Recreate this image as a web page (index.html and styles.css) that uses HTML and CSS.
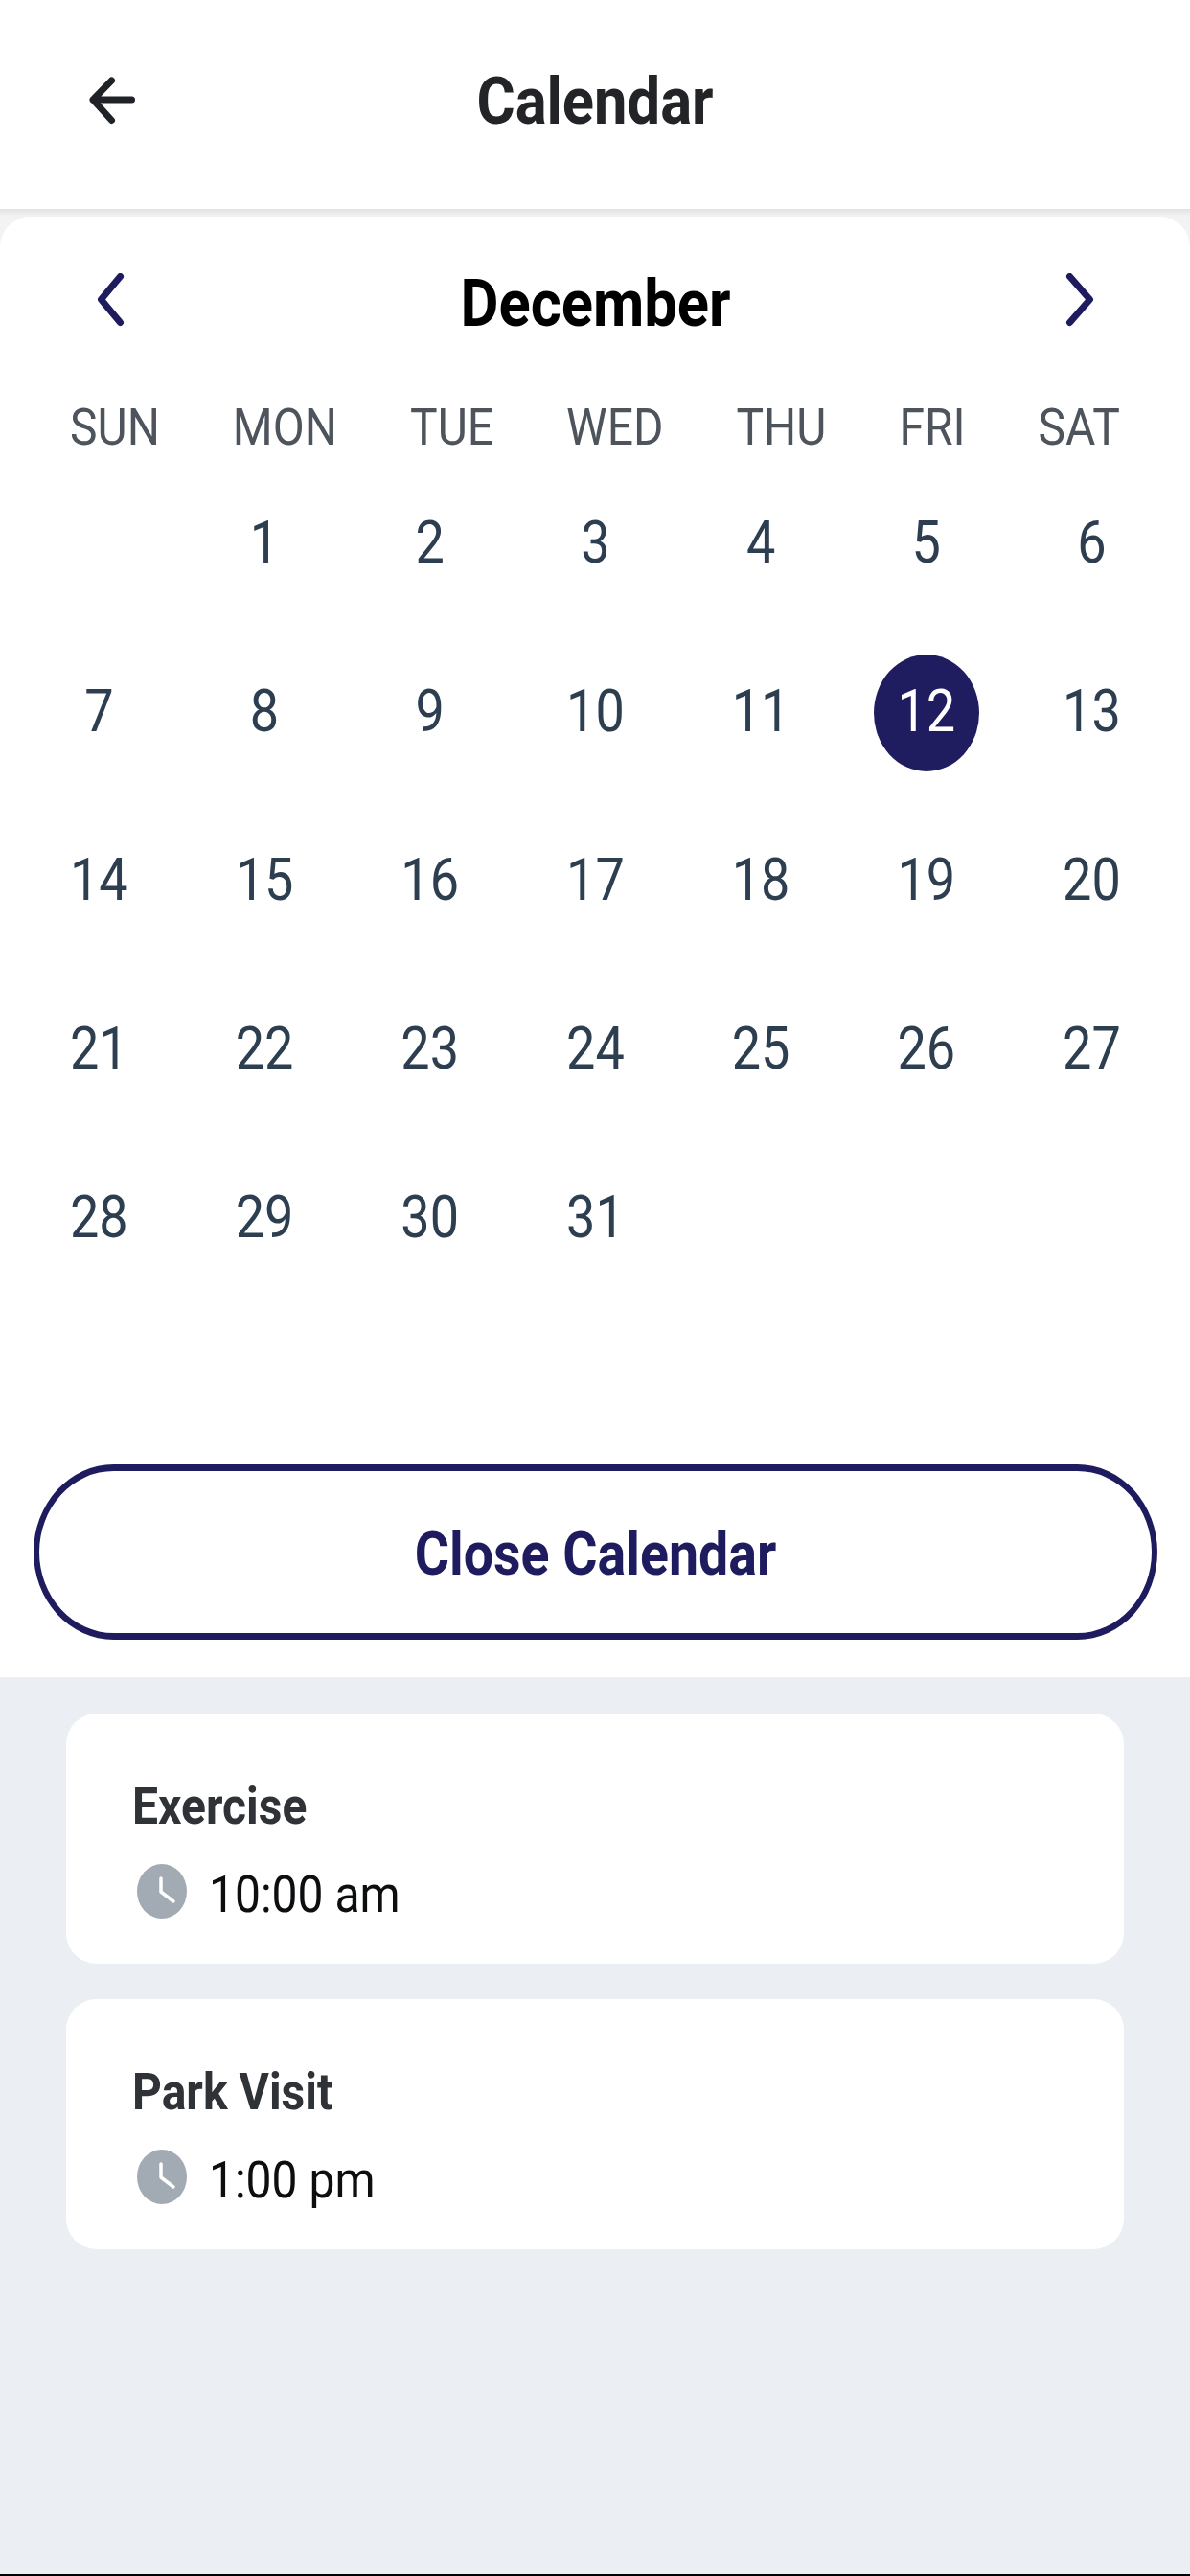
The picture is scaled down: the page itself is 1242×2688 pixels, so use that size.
FILE: index.html
```html
<!DOCTYPE html>
<html lang="en">
<head>
<meta charset="utf-8">
<title>Calendar</title>
<link rel="stylesheet" href="styles.css">
</head>
<body>
<div class="app">
  <header class="topbar">
    <button class="back" aria-label="Back">
      <svg width="52" height="52" viewBox="0 0 52 52"><path d="M25.500 5 6 25l19.500 21.500M6 25h40.500" class="icon-dark"/></svg>
    </button>
    <h1 class="title"><span class="tall">Calendar</span></h1>
  </header>
  <div class="shade">
    <section class="sheet">
      <div class="month-nav">
        <svg class="chev" width="32" height="56" viewBox="0 0 32 56"><path d="M26.500 3.500 6.500 27.500l20 24" class="icon-navy"/></svg>
        <h2 class="month"><span class="tall">December</span></h2>
        <svg class="chev" width="32" height="56" viewBox="0 0 32 56"><path d="M4.500 3.500 25.500 27.500l-21 24" class="icon-navy"/></svg>
      </div>
      <div class="weekdays">
        <span class="tall">SUN</span><span class="tall">MON</span><span class="tall">TUE</span><span class="tall">WED</span><span class="tall">THU</span><span class="tall">FRI</span><span class="tall">SAT</span>
      </div>
      <div class="days">
        <div class="day"></div>
        <div class="day"><span class="tall">1</span></div>
        <div class="day"><span class="tall">2</span></div>
        <div class="day"><span class="tall">3</span></div>
        <div class="day"><span class="tall">4</span></div>
        <div class="day"><span class="tall">5</span></div>
        <div class="day"><span class="tall">6</span></div>
        <div class="day"><span class="tall">7</span></div>
        <div class="day"><span class="tall">8</span></div>
        <div class="day"><span class="tall">9</span></div>
        <div class="day"><span class="tall">10</span></div>
        <div class="day"><span class="tall">11</span></div>
        <div class="day selected"><span class="tall">12</span></div>
        <div class="day"><span class="tall">13</span></div>
        <div class="day"><span class="tall">14</span></div>
        <div class="day"><span class="tall">15</span></div>
        <div class="day"><span class="tall">16</span></div>
        <div class="day"><span class="tall">17</span></div>
        <div class="day"><span class="tall">18</span></div>
        <div class="day"><span class="tall">19</span></div>
        <div class="day"><span class="tall">20</span></div>
        <div class="day"><span class="tall">21</span></div>
        <div class="day"><span class="tall">22</span></div>
        <div class="day"><span class="tall">23</span></div>
        <div class="day"><span class="tall">24</span></div>
        <div class="day"><span class="tall">25</span></div>
        <div class="day"><span class="tall">26</span></div>
        <div class="day"><span class="tall">27</span></div>
        <div class="day"><span class="tall">28</span></div>
        <div class="day"><span class="tall">29</span></div>
        <div class="day"><span class="tall">30</span></div>
        <div class="day"><span class="tall">31</span></div>
      </div>
      <button class="close-btn"><span class="tall">Close Calendar</span></button>
    </section>
  </div>
  <main class="events">
    <article class="event">
      <div class="event-name"><span class="tall">Exercise</span></div>
      <div class="event-time">
        <svg class="clock" width="52" height="57" viewBox="0 0 52 57"><ellipse cx="26" cy="28.500" rx="26" ry="28.500" fill="#a2aab4"/><path d="M25 15v14l13 10" fill="none" stroke="#fff" stroke-width="3.500" stroke-linecap="round" stroke-linejoin="round"/></svg>
        <span class="tall">10:00 am</span>
      </div>
    </article>
    <article class="event">
      <div class="event-name"><span class="tall">Park Visit</span></div>
      <div class="event-time">
        <svg class="clock" width="52" height="57" viewBox="0 0 52 57"><ellipse cx="26" cy="28.500" rx="26" ry="28.500" fill="#a2aab4"/><path d="M25 15v14l13 10" fill="none" stroke="#fff" stroke-width="3.500" stroke-linecap="round" stroke-linejoin="round"/></svg>
        <span class="tall">1:00 pm</span>
      </div>
    </article>
  </main>
</div>
</body>
</html>
```
FILE: styles.css
```css
* { box-sizing: border-box; }
html, body { margin: 0; padding: 0; }
body { font-family: Roboto, "Liberation Sans", sans-serif; background: #000; }
.app {
  width: 1242px;
  height: 2686px;
  background: #ebeff4;
  display: flex;
  flex-direction: column;
}
.tall { display: inline-block; transform: scaleY(1.12); }
.icon-dark, .icon-navy { fill: none; stroke-width: 7; stroke-linecap: round; stroke-linejoin: round; }
.icon-dark { stroke: #1f2328; }
.icon-navy { stroke: #1e1b5e; }

.topbar {
  height: 218px;
  background: #fff;
  display: flex;
  align-items: center;
  justify-content: center;
  position: relative;
  flex: none;
}
.back {
  position: absolute;
  left: 91px;
  top: 79px;
  width: 52px;
  height: 52px;
  padding: 0;
  border: 0;
  background: none;
}
.title { margin: 0 0 5px; font-size: 61.500px; font-weight: 700; color: #222427; line-height: 1; }

.shade {
  background: linear-gradient(#e2e2e2 0, #f3f3f3 8px);
  padding-top: 8px;
  flex: none;
}
.sheet {
  background: #fff;
  height: 1524px;
  border-radius: 32px 32px 0 0;
  padding: 0 17px;
}
.month-nav {
  display: flex;
  align-items: center;
  justify-content: space-between;
  padding: 56px 81px 0 82px;
  height: 118px;
}
.month { margin: 9px 0 0; font-size: 61.500px; font-weight: 700; color: #000; line-height: 1; }
.weekdays {
  display: flex;
  justify-content: space-between;
  margin-top: 70px;
  padding: 0 56px;
  font-size: 48px;
  line-height: 64px;
  color: #4d545c;
}
.days {
  display: grid;
  grid-template-columns: repeat(7, 172.700px);
  grid-auto-rows: 176px;
  height: 1050px;
  font-size: 54px;
  color: #2c3e50;
}
.day { display: flex; align-items: center; justify-content: center; }
.selected {
  width: 110px;
  height: 122px;
  margin-top: 4px;
  padding-bottom: 4px;
  border-radius: 50%;
  background: #1f1d60;
  color: #fff;
  align-self: center;
  justify-self: center;
}
.close-btn {
  display: block;
  width: 1173px;
  height: 183px;
  margin: 0 0 0 18px;
  padding: 5px 0 0;
  border-style: solid;
  border-color: #1e1b5e;
  border-width: 7px 6px;
  border-radius: 84px / 92px;
  background: #fff;
  color: #1e1b5e;
  font: 700 55.500px Roboto, sans-serif;
}

.events {
  padding: 38px 69px 0;
  display: flex;
  flex-direction: column;
  gap: 37px;
}
.event {
  height: 261px;
  background: #fff;
  border-radius: 32px;
  padding: 69px 0 0 69px;
}
.event-name { font-size: 48px; font-weight: 700; color: #2f3338; line-height: 56px; }
.event-time {
  display: flex;
  align-items: center;
  gap: 23px;
  margin-top: 32px;
  padding-left: 5px;
  font-size: 48px;
  color: #0c0e10;
  line-height: 62px;
}
.clock { margin-bottom: 7px; }
```
